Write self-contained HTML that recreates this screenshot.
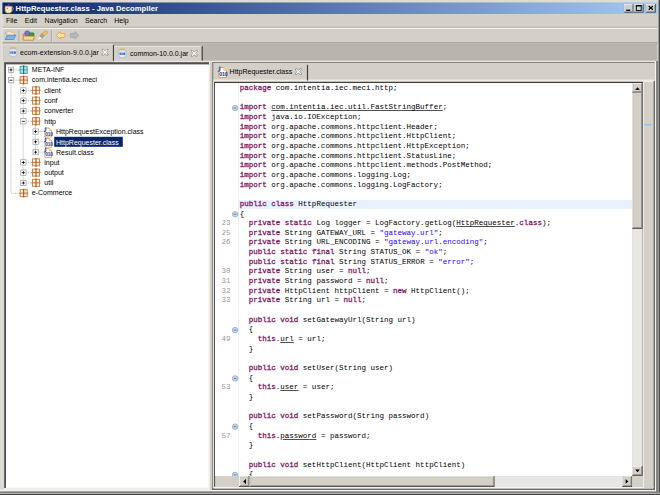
<!DOCTYPE html>
<html><head><meta charset="utf-8"><style>
html,body{margin:0;padding:0;width:660px;height:495px;overflow:hidden;background:#d4d0c8}
.t{position:absolute;white-space:pre}
u{text-decoration:underline;text-decoration-color:#505050;text-decoration-thickness:0.7px;text-underline-offset:1px}
b{font-weight:normal;-webkit-text-stroke:0.28px #801860;color:#801860 !important}
svg.bg{position:absolute;left:0;top:0}
</style></head><body>
<svg class="bg" width="660" height="495" viewBox="0 0 660 495">
<rect x="0.00" y="0.00" width="660.00" height="495.00" fill="#d4d0c8" />
<rect x="0.00" y="0.00" width="660.00" height="2.50" fill="#dedbd5" />
<rect x="0.00" y="0.00" width="3.60" height="495.00" fill="#dcdad4" />
<rect x="1.45" y="1.45" width="1.00" height="492.00" fill="#e6e3de" />
<rect x="654.90" y="61.00" width="1.20" height="434.00" fill="#f4f3f0" />
<rect x="656.10" y="61.00" width="2.10" height="434.00" fill="#808080" />
<rect x="658.20" y="0.00" width="0.50" height="495.00" fill="#b8b6b0" />
<rect x="658.70" y="0.00" width="1.30" height="495.00" fill="#484848" />
<rect x="0.00" y="490.00" width="656.00" height="1.20" fill="#f4f3f0" />
<rect x="0.00" y="491.40" width="660.00" height="1.60" fill="#808080" />
<rect x="0.00" y="493.00" width="660.00" height="0.90" fill="#c0beb8" />
<rect x="0.00" y="493.90" width="660.00" height="1.10" fill="#404040" />
<defs><linearGradient id="tg" x1="0" x2="1" y1="0" y2="0"><stop offset="0" stop-color="#0a246a"/><stop offset="1" stop-color="#a6caf0"/></linearGradient><clipPath id="cc"><rect x="215" y="83.1" width="24" height="393.1"/></clipPath><pattern id="chk" width="2" height="2" patternUnits="userSpaceOnUse"><rect width="2" height="2" fill="#d4d0c8"/><rect width="1" height="1" fill="#fff"/><rect x="1" y="1" width="1" height="1" fill="#fff"/></pattern></defs>
<rect x="2.40" y="2.50" width="655.20" height="11.50" fill="url(#tg)" />
<g transform="translate(4.2,3.8) scale(1)"><path d="M0.9 2.4 h6.8 v4.4 q0 2.4 -2.4 2.4 h-2 q-2.4 0 -2.4 -2.4 z" fill="#fcecc8" stroke="#c89048" stroke-width="0.7"/>
<path d="M7.6 3.4 q2 0.2 1.4 2.2 q-0.4 1.4 -1.6 1.4" fill="none" stroke="#c89048" stroke-width="0.9"/>
<path d="M3.6 2 q0.2 -1.2 1.6 -2" fill="none" stroke="#8a8aa8" stroke-width="0.6"/>
<circle cx="3.2" cy="4.6" r="0.55" fill="#e04858"/></g>
<rect x="623.90" y="4.00" width="9.50" height="8.60" fill="#404040" />
<rect x="623.90" y="4.00" width="8.70" height="7.80" fill="#fff" />
<rect x="624.70" y="4.80" width="7.90" height="7.00" fill="#808080" />
<rect x="624.70" y="4.80" width="7.30" height="6.40" fill="#d4d0c8" />
<rect x="626.20" y="9.60" width="4.10" height="1.40" fill="#000" />
<rect x="633.70" y="4.00" width="9.90" height="8.60" fill="#404040" />
<rect x="633.70" y="4.00" width="9.10" height="7.80" fill="#fff" />
<rect x="634.50" y="4.80" width="8.30" height="7.00" fill="#808080" />
<rect x="634.50" y="4.80" width="7.70" height="6.40" fill="#d4d0c8" />
<rect x="636.3" y="5.6" width="4.9" height="4.9" fill="none" stroke="#000" stroke-width="0.9"/><rect x="635.9" y="5.2" width="5.7" height="1.2" fill="#000"/>
<rect x="645.80" y="4.00" width="10.10" height="8.60" fill="#404040" />
<rect x="645.80" y="4.00" width="9.30" height="7.80" fill="#fff" />
<rect x="646.60" y="4.80" width="8.50" height="7.00" fill="#808080" />
<rect x="646.60" y="4.80" width="7.90" height="6.40" fill="#d4d0c8" />
<path d="M648.7 6.1 L652.9 9.7 M652.9 6.1 L648.7 9.7" stroke="#000" stroke-width="1.3"/>
<rect x="2.40" y="26.80" width="655.20" height="1.00" fill="#a8a8a0" />
<rect x="2.40" y="27.80" width="655.20" height="1.00" fill="#fbfaf8" />
<rect x="18.50" y="30.30" width="1.20" height="11.20" fill="#a8acb0" />
<rect x="19.70" y="30.30" width="0.60" height="11.20" fill="#e4e2de" />
<rect x="50.90" y="30.30" width="1.20" height="11.20" fill="#a8acb0" />
<rect x="52.10" y="30.30" width="0.60" height="11.20" fill="#e4e2de" />
<g transform="translate(4.8,30.8) scale(1)"><path d="M2.2 0.6 h2.8 l1 1 h3.6 v6.8 h-7.4 z" fill="#fbe8b8" stroke="#d8b070" stroke-width="0.6"/>
<path d="M0.4 1.6 v2" stroke="#8090b0" stroke-width="0.5"/>
<path d="M0.4 8.7 L2.6 4.3 H11 L8.8 8.7 Z" fill="#80b4ee" stroke="#3c70c0" stroke-width="0.6"/></g>
<g transform="translate(22.6,30.4) scale(1)"><path d="M0.5 3.6 h3.4 l1 1 h6.4 v5 h-10.8 z" fill="#e8a850" stroke="#b07830" stroke-width="0.6"/>
<circle cx="4.6" cy="3" r="2.6" fill="#8070c8" stroke="#5848a0" stroke-width="0.5"/>
<rect x="6.8" y="2.4" width="4.6" height="3.4" rx="0.6" fill="#30a040" stroke="#207030" stroke-width="0.5"/>
<path d="M0.5 9.6 L1.4 5.8 H11.6 L10.8 9.6 Z" fill="#f8d890" stroke="#c08840" stroke-width="0.6"/></g>
<g transform="translate(36.8,30.4) scale(1)"><path d="M0.4 9.8 Q0.8 7 3 5.6 L5 7.6 Q3.4 9.6 0.4 9.8 Z" fill="#fff4dc" stroke="#e8b060" stroke-width="0.5"/>
<path d="M3 5.4 L5.2 3.2 L7.4 5.4 L5.2 7.6 Z" fill="#a8a8a8" stroke="#787878" stroke-width="0.5"/>
<path d="M5.2 3.2 L8.6 0.6 Q10.6 0.4 10.8 2.4 L7.4 5.4 Z" fill="#f0c070" stroke="#c89040" stroke-width="0.6"/></g>
<g transform="translate(55.9,31.1) scale(1)"><path d="M0.5 4.3 L4.2 0.5 V2.2 H8.2 Q9 2.2 9 3 V5.6 Q9 6.4 8.2 6.4 H4.2 V8.1 Z" fill="#fde2a4" stroke="#e4a444" stroke-width="0.9"/></g>
<g transform="translate(69.9,31.1) scale(1)"><path d="M8.9 4.3 L5.2 0.5 V2.2 H1.2 Q0.4 2.2 0.4 3 V5.6 Q0.4 6.4 1.2 6.4 H5.2 V8.1 Z" fill="#b4b8bc" stroke="#a0a4a8" stroke-width="0.8"/></g>
<rect x="2.40" y="42.20" width="655.20" height="1.20" fill="#a4a09a" />
<rect x="3.60" y="43.40" width="653.50" height="17.40" fill="#b8b5ae" />
<rect x="3.60" y="44.00" width="109.40" height="17.30" fill="#d4d0c8" />
<rect x="3.60" y="44.00" width="109.40" height="0.70" fill="#e8e6e0" />
<rect x="112.90" y="45.00" width="1.10" height="15.80" fill="#404040" />
<rect x="114.00" y="45.90" width="87.70" height="15.00" fill="#d4d0c8" />
<rect x="114.00" y="45.90" width="87.70" height="0.70" fill="#ecebe6" />
<rect x="201.60" y="46.20" width="1.20" height="14.60" fill="#404040" />
<rect x="114.00" y="60.80" width="541.00" height="0.90" fill="#f4f3f0" />
<g transform="translate(9,46.8) scale(1)"><rect x="1.2" y="0.2" width="5.6" height="2" rx="0.6" fill="#eab868"/>
<rect x="0.5" y="2" width="7.2" height="7.6" rx="2" fill="#e4ecf8" stroke="#98b0d8" stroke-width="0.6"/>
<rect x="1.3" y="4.6" width="5.6" height="2.4" fill="#5070a8"/>
<path d="M2.9 4.6 V7 M4.6 4.6 V7" stroke="#e4ecf8" stroke-width="0.5"/></g>
<g transform="translate(118.3,48) scale(1)"><rect x="1.2" y="0.2" width="5.6" height="2" rx="0.6" fill="#eab868"/>
<rect x="0.5" y="2" width="7.2" height="7.6" rx="2" fill="#e4ecf8" stroke="#98b0d8" stroke-width="0.6"/>
<rect x="1.3" y="4.6" width="5.6" height="2.4" fill="#5070a8"/>
<path d="M2.9 4.6 V7 M4.6 4.6 V7" stroke="#e4ecf8" stroke-width="0.5"/></g>
<g transform="translate(101.8,49) scale(1)"><path d="M1 1 L5.6 5.6 M5.6 1 L1 5.6" stroke="#9c9890" stroke-width="2.4" stroke-linecap="round"/>
<path d="M1 1 L5.6 5.6 M5.6 1 L1 5.6" stroke="#fff" stroke-width="1.1"/></g>
<g transform="translate(190.9,50) scale(1)"><path d="M1 1 L5.6 5.6 M5.6 1 L1 5.6" stroke="#9c9890" stroke-width="2.4" stroke-linecap="round"/>
<path d="M1 1 L5.6 5.6 M5.6 1 L1 5.6" stroke="#fff" stroke-width="1.1"/></g>
<rect x="4.00" y="62.00" width="206.00" height="428.00" fill="#eeede9" />
<rect x="4.00" y="62.00" width="205.00" height="1.00" fill="#707070" />
<rect x="4.00" y="62.00" width="1.00" height="426.00" fill="#707070" />
<rect x="4.90" y="62.90" width="204.00" height="1.70" fill="#505050" />
<rect x="4.90" y="62.90" width="1.10" height="425.00" fill="#4e4e4e" />
<rect x="6.00" y="64.60" width="202.50" height="423.10" fill="#fff" />
<line x1="11" y1="72.9" x2="11" y2="193.26" stroke="#b8b8b8" stroke-width="0.8" stroke-dasharray="1.4 0.6"/>
<line x1="23.2" y1="83.18" x2="23.2" y2="182.98000000000002" stroke="#b8b8b8" stroke-width="0.8" stroke-dasharray="1.4 0.6"/>
<line x1="35.4" y1="124.30000000000001" x2="35.4" y2="152.14" stroke="#b8b8b8" stroke-width="0.8" stroke-dasharray="1.4 0.6"/>
<line x1="13.7" y1="69.9" x2="19.0" y2="69.9" stroke="#b8b8b8" stroke-width="0.8" stroke-dasharray="1.4 0.6"/>
<rect x="8.40" y="67.20" width="5.3" height="5.3" fill="#fff" stroke="#9a9a9a" stroke-width="0.7"/>
<rect x="9.50" y="69.50" width="3.00" height="0.80" fill="#000" />
<rect x="10.60" y="68.40" width="0.80" height="3.00" fill="#000" />
<g transform="translate(19.7,65.80000000000001) scale(1)"><rect x="0.5" y="0.5" width="7" height="7" fill="#b0e4e0" stroke="#38aca4" stroke-width="1"/>
<path d="M-0.7 4 H8.7" stroke="#40a8b0" stroke-width="0.9"/>
<path d="M4 -0.4 V8.4" stroke="#304a80" stroke-width="1"/></g>
<line x1="13.7" y1="80.18" x2="19.0" y2="80.18" stroke="#b8b8b8" stroke-width="0.8" stroke-dasharray="1.4 0.6"/>
<rect x="8.40" y="77.48" width="5.3" height="5.3" fill="#fff" stroke="#9a9a9a" stroke-width="0.7"/>
<rect x="9.50" y="79.78" width="3.00" height="0.80" fill="#000" />
<g transform="translate(19.7,76.08000000000001) scale(1)"><rect x="0.5" y="0.5" width="7" height="7" fill="#fcecd4" stroke="#c88848" stroke-width="1"/>
<path d="M-0.7 4 H8.7" stroke="#c07838" stroke-width="1"/>
<path d="M4 -0.4 V8.4" stroke="#8a5030" stroke-width="1"/></g>
<line x1="26.0" y1="90.46000000000001" x2="31.3" y2="90.46000000000001" stroke="#b8b8b8" stroke-width="0.8" stroke-dasharray="1.4 0.6"/>
<rect x="20.70" y="87.76" width="5.3" height="5.3" fill="#fff" stroke="#9a9a9a" stroke-width="0.7"/>
<rect x="21.80" y="90.06" width="3.00" height="0.80" fill="#000" />
<rect x="22.90" y="88.96" width="0.80" height="3.00" fill="#000" />
<g transform="translate(32.0,86.36000000000001) scale(1)"><rect x="0.5" y="0.5" width="7" height="7" fill="#fcecd4" stroke="#c88848" stroke-width="1"/>
<path d="M-0.7 4 H8.7" stroke="#c07838" stroke-width="1"/>
<path d="M4 -0.4 V8.4" stroke="#8a5030" stroke-width="1"/></g>
<line x1="26.0" y1="100.74000000000001" x2="31.3" y2="100.74000000000001" stroke="#b8b8b8" stroke-width="0.8" stroke-dasharray="1.4 0.6"/>
<rect x="20.70" y="98.04" width="5.3" height="5.3" fill="#fff" stroke="#9a9a9a" stroke-width="0.7"/>
<rect x="21.80" y="100.34" width="3.00" height="0.80" fill="#000" />
<rect x="22.90" y="99.24" width="0.80" height="3.00" fill="#000" />
<g transform="translate(32.0,96.64000000000001) scale(1)"><rect x="0.5" y="0.5" width="7" height="7" fill="#fcecd4" stroke="#c88848" stroke-width="1"/>
<path d="M-0.7 4 H8.7" stroke="#c07838" stroke-width="1"/>
<path d="M4 -0.4 V8.4" stroke="#8a5030" stroke-width="1"/></g>
<line x1="26.0" y1="111.02000000000001" x2="31.3" y2="111.02000000000001" stroke="#b8b8b8" stroke-width="0.8" stroke-dasharray="1.4 0.6"/>
<rect x="20.70" y="108.32" width="5.3" height="5.3" fill="#fff" stroke="#9a9a9a" stroke-width="0.7"/>
<rect x="21.80" y="110.62" width="3.00" height="0.80" fill="#000" />
<rect x="22.90" y="109.52" width="0.80" height="3.00" fill="#000" />
<g transform="translate(32.0,106.92000000000002) scale(1)"><rect x="0.5" y="0.5" width="7" height="7" fill="#fcecd4" stroke="#c88848" stroke-width="1"/>
<path d="M-0.7 4 H8.7" stroke="#c07838" stroke-width="1"/>
<path d="M4 -0.4 V8.4" stroke="#8a5030" stroke-width="1"/></g>
<line x1="26.0" y1="121.30000000000001" x2="31.3" y2="121.30000000000001" stroke="#b8b8b8" stroke-width="0.8" stroke-dasharray="1.4 0.6"/>
<rect x="20.70" y="118.60" width="5.3" height="5.3" fill="#fff" stroke="#9a9a9a" stroke-width="0.7"/>
<rect x="21.80" y="120.90" width="3.00" height="0.80" fill="#000" />
<g transform="translate(32.0,117.20000000000002) scale(1)"><rect x="0.5" y="0.5" width="7" height="7" fill="#fcecd4" stroke="#c88848" stroke-width="1"/>
<path d="M-0.7 4 H8.7" stroke="#c07838" stroke-width="1"/>
<path d="M4 -0.4 V8.4" stroke="#8a5030" stroke-width="1"/></g>
<line x1="38.300000000000004" y1="131.57999999999998" x2="43.6" y2="131.57999999999998" stroke="#b8b8b8" stroke-width="0.8" stroke-dasharray="1.4 0.6"/>
<rect x="33.00" y="128.88" width="5.3" height="5.3" fill="#fff" stroke="#9a9a9a" stroke-width="0.7"/>
<rect x="34.10" y="131.18" width="3.00" height="0.80" fill="#000" />
<rect x="35.20" y="130.08" width="0.80" height="3.00" fill="#000" />
<g transform="translate(44.3,126.97999999999999) scale(1)"><path d="M0.6 1.1 H5 L7.4 3.5 V10 H0.6 Z" fill="#fff" stroke="#d09858" stroke-width="0.8"/>
<path d="M5 1.1 V3.5 H7.4" fill="#f8e4b8" stroke="#d8a868" stroke-width="0.6"/>
<text x="1.0" y="8.6" font-size="4.7" font-weight="bold" font-family="Liberation Sans" fill="#1a3480" letter-spacing="-0.15">010</text>
<path d="M1.5 0.2 V3.3 Q1.5 4.6 -0.3 4.4" fill="none" stroke="#2a58c0" stroke-width="1.1"/></g>
<line x1="38.300000000000004" y1="141.86" x2="43.6" y2="141.86" stroke="#b8b8b8" stroke-width="0.8" stroke-dasharray="1.4 0.6"/>
<rect x="33.00" y="139.16" width="5.3" height="5.3" fill="#fff" stroke="#9a9a9a" stroke-width="0.7"/>
<rect x="34.10" y="141.46" width="3.00" height="0.80" fill="#000" />
<rect x="35.20" y="140.36" width="0.80" height="3.00" fill="#000" />
<g transform="translate(44.3,137.26000000000002) scale(1)"><path d="M0.6 1.1 H5 L7.4 3.5 V10 H0.6 Z" fill="#fff" stroke="#d09858" stroke-width="0.8"/>
<path d="M5 1.1 V3.5 H7.4" fill="#f8e4b8" stroke="#d8a868" stroke-width="0.6"/>
<text x="1.0" y="8.6" font-size="4.7" font-weight="bold" font-family="Liberation Sans" fill="#1a3480" letter-spacing="-0.15">010</text>
<path d="M1.5 0.2 V3.3 Q1.5 4.6 -0.3 4.4" fill="none" stroke="#2a58c0" stroke-width="1.1"/></g>
<rect x="54.20" y="136.80" width="68.60" height="10.00" fill="#0a246a" />
<line x1="38.300000000000004" y1="152.14" x2="43.6" y2="152.14" stroke="#b8b8b8" stroke-width="0.8" stroke-dasharray="1.4 0.6"/>
<rect x="33.00" y="149.44" width="5.3" height="5.3" fill="#fff" stroke="#9a9a9a" stroke-width="0.7"/>
<rect x="34.10" y="151.74" width="3.00" height="0.80" fill="#000" />
<rect x="35.20" y="150.64" width="0.80" height="3.00" fill="#000" />
<g transform="translate(44.3,147.54) scale(1)"><path d="M0.6 1.1 H5 L7.4 3.5 V10 H0.6 Z" fill="#fff" stroke="#d09858" stroke-width="0.8"/>
<path d="M5 1.1 V3.5 H7.4" fill="#f8e4b8" stroke="#d8a868" stroke-width="0.6"/>
<text x="1.0" y="8.6" font-size="4.7" font-weight="bold" font-family="Liberation Sans" fill="#1a3480" letter-spacing="-0.15">010</text>
<path d="M1.5 0.2 V3.3 Q1.5 4.6 -0.3 4.4" fill="none" stroke="#2a58c0" stroke-width="1.1"/></g>
<line x1="26.0" y1="162.42000000000002" x2="31.3" y2="162.42000000000002" stroke="#b8b8b8" stroke-width="0.8" stroke-dasharray="1.4 0.6"/>
<rect x="20.70" y="159.72" width="5.3" height="5.3" fill="#fff" stroke="#9a9a9a" stroke-width="0.7"/>
<rect x="21.80" y="162.02" width="3.00" height="0.80" fill="#000" />
<rect x="22.90" y="160.92" width="0.80" height="3.00" fill="#000" />
<g transform="translate(32.0,158.32000000000002) scale(1)"><rect x="0.5" y="0.5" width="7" height="7" fill="#fcecd4" stroke="#c88848" stroke-width="1"/>
<path d="M-0.7 4 H8.7" stroke="#c07838" stroke-width="1"/>
<path d="M4 -0.4 V8.4" stroke="#8a5030" stroke-width="1"/></g>
<line x1="26.0" y1="172.7" x2="31.3" y2="172.7" stroke="#b8b8b8" stroke-width="0.8" stroke-dasharray="1.4 0.6"/>
<rect x="20.70" y="170.00" width="5.3" height="5.3" fill="#fff" stroke="#9a9a9a" stroke-width="0.7"/>
<rect x="21.80" y="172.30" width="3.00" height="0.80" fill="#000" />
<rect x="22.90" y="171.20" width="0.80" height="3.00" fill="#000" />
<g transform="translate(32.0,168.6) scale(1)"><rect x="0.5" y="0.5" width="7" height="7" fill="#fcecd4" stroke="#c88848" stroke-width="1"/>
<path d="M-0.7 4 H8.7" stroke="#c07838" stroke-width="1"/>
<path d="M4 -0.4 V8.4" stroke="#8a5030" stroke-width="1"/></g>
<line x1="26.0" y1="182.98000000000002" x2="31.3" y2="182.98000000000002" stroke="#b8b8b8" stroke-width="0.8" stroke-dasharray="1.4 0.6"/>
<rect x="20.70" y="180.28" width="5.3" height="5.3" fill="#fff" stroke="#9a9a9a" stroke-width="0.7"/>
<rect x="21.80" y="182.58" width="3.00" height="0.80" fill="#000" />
<rect x="22.90" y="181.48" width="0.80" height="3.00" fill="#000" />
<g transform="translate(32.0,178.88000000000002) scale(1)"><rect x="0.5" y="0.5" width="7" height="7" fill="#fcecd4" stroke="#c88848" stroke-width="1"/>
<path d="M-0.7 4 H8.7" stroke="#c07838" stroke-width="1"/>
<path d="M4 -0.4 V8.4" stroke="#8a5030" stroke-width="1"/></g>
<line x1="11.0" y1="193.26" x2="19.0" y2="193.26" stroke="#b8b8b8" stroke-width="0.8" stroke-dasharray="1.4 0.6"/>
<g transform="translate(19.7,189.16) scale(1)"><rect x="0.5" y="0.5" width="7" height="7" fill="#fcecd4" stroke="#c88848" stroke-width="1"/>
<path d="M-0.7 4 H8.7" stroke="#c07838" stroke-width="1"/>
<path d="M4 -0.4 V8.4" stroke="#8a5030" stroke-width="1"/></g>
<rect x="212.10" y="62.00" width="442.50" height="1.00" fill="#808080" />
<rect x="212.10" y="62.00" width="1.20" height="427.60" fill="#808080" />
<rect x="653.40" y="81.00" width="1.40" height="408.60" fill="#505050" />
<rect x="212.10" y="488.50" width="442.70" height="1.40" fill="#606060" />
<rect x="214.00" y="486.70" width="439.40" height="1.70" fill="#f4f3f0" />
<rect x="213.30" y="79.60" width="440.20" height="1.30" fill="#f0efea" />
<rect x="306.90" y="64.80" width="1.20" height="15.80" fill="#404040" />
<g transform="translate(218.2,66.3) scale(1.12)"><path d="M0.6 1.1 H5 L7.4 3.5 V10 H0.6 Z" fill="#fff" stroke="#d09858" stroke-width="0.8"/>
<path d="M5 1.1 V3.5 H7.4" fill="#f8e4b8" stroke="#d8a868" stroke-width="0.6"/>
<text x="1.0" y="8.6" font-size="4.7" font-weight="bold" font-family="Liberation Sans" fill="#1a3480" letter-spacing="-0.15">010</text>
<path d="M1.5 0.2 V3.3 Q1.5 4.6 -0.3 4.4" fill="none" stroke="#2a58c0" stroke-width="1.1"/></g>
<g transform="translate(295.1,68.3) scale(1)"><path d="M1 1 L5.6 5.6 M5.6 1 L1 5.6" stroke="#9c9890" stroke-width="2.4" stroke-linecap="round"/>
<path d="M1 1 L5.6 5.6 M5.6 1 L1 5.6" stroke="#fff" stroke-width="1.1"/></g>
<rect x="214.00" y="81.90" width="429.30" height="1.20" fill="#404040" />
<rect x="214.00" y="81.90" width="1.30" height="404.80" fill="#404040" />
<rect x="213.30" y="81.00" width="0.80" height="407.00" fill="#f4f3f0" />
<rect x="215.00" y="83.10" width="417.20" height="393.10" fill="#fff" />
<rect x="215.30" y="476.20" width="23.70" height="10.50" fill="#d4d0c8" />
<rect x="238.30" y="83.10" width="0.70" height="393.10" fill="#e8e8e8" />
<rect x="239.00" y="199.86" width="393.20" height="9.05" fill="#e8f2fe" />
<rect x="632.20" y="83.10" width="11.20" height="393.10" fill="#e9e7e3" />
<rect x="642.50" y="83.10" width="0.90" height="393.10" fill="#808080" />
<rect x="632.20" y="83.10" width="10.40" height="9.60" fill="#404040" />
<rect x="632.20" y="83.10" width="9.50" height="8.70" fill="#fff" />
<rect x="633.10" y="84.00" width="8.60" height="7.80" fill="#808080" />
<rect x="633.10" y="84.00" width="7.90" height="7.10" fill="#d4d0c8" />
<path d="M635.2 90 L637.5 87.3 L639.8 90 z" fill="#000"/>
<rect x="632.20" y="92.70" width="10.40" height="136.10" fill="#404040" />
<rect x="632.20" y="92.70" width="9.50" height="135.20" fill="#fff" />
<rect x="633.10" y="93.60" width="8.60" height="134.30" fill="#808080" />
<rect x="633.10" y="93.60" width="7.90" height="133.60" fill="#d4d0c8" />
<rect x="632.20" y="466.00" width="10.40" height="9.80" fill="#404040" />
<rect x="632.20" y="466.00" width="9.50" height="8.90" fill="#fff" />
<rect x="633.10" y="466.90" width="8.60" height="8.00" fill="#808080" />
<rect x="633.10" y="466.90" width="7.90" height="7.30" fill="#d4d0c8" />
<path d="M635.2 469.6 L637.5 472.3 L639.8 469.6 z" fill="#000"/>
<rect x="239.00" y="476.20" width="393.20" height="10.80" fill="#e9e7e3" />
<rect x="239.00" y="476.20" width="10.40" height="10.80" fill="#404040" />
<rect x="239.00" y="476.20" width="9.50" height="9.90" fill="#fff" />
<rect x="239.90" y="477.10" width="8.60" height="9.00" fill="#808080" />
<rect x="239.90" y="477.10" width="7.90" height="8.30" fill="#d4d0c8" />
<path d="M246 479 L243.2 481.6 L246 484.2 z" fill="#000"/>
<rect x="249.60" y="476.20" width="244.90" height="10.80" fill="#404040" />
<rect x="249.60" y="476.20" width="244.00" height="9.90" fill="#fff" />
<rect x="250.50" y="477.10" width="243.10" height="9.00" fill="#808080" />
<rect x="250.50" y="477.10" width="242.40" height="8.30" fill="#d4d0c8" />
<rect x="622.20" y="476.20" width="10.00" height="10.80" fill="#404040" />
<rect x="622.20" y="476.20" width="9.10" height="9.90" fill="#fff" />
<rect x="623.10" y="477.10" width="8.20" height="9.00" fill="#808080" />
<rect x="623.10" y="477.10" width="7.50" height="8.30" fill="#d4d0c8" />
<path d="M625.6 479 L628.4 481.4 L625.6 483.8 z" fill="#000"/>
<rect x="632.20" y="476.20" width="10.80" height="10.80" fill="#d4d0c8" />
<rect x="643.30" y="81.00" width="10.20" height="407.00" fill="#d4d0c8" />
<rect x="643.10" y="81.00" width="0.90" height="407.00" fill="#f4f3f0" />
<rect x="643.10" y="81.00" width="10.40" height="0.80" fill="#f4f3f0" />
<rect x="644.00" y="124.10" width="8.40" height="1.40" fill="#90c0f0" />
<g clip-path="url(#cc)"><g transform="translate(235.1,108.04)"><circle r="2.75" fill="#c8d8ec" stroke="#90a8cc" stroke-width="0.8"/><path d="M-1.4 0 H1.4" stroke="#5a70a0" stroke-width="0.9"/></g></g>
<g clip-path="url(#cc)"><g transform="translate(235.1,214.24)"><circle r="2.75" fill="#c8d8ec" stroke="#90a8cc" stroke-width="0.8"/><path d="M-1.4 0 H1.4" stroke="#5a70a0" stroke-width="0.9"/></g></g>
<g clip-path="url(#cc)"><g transform="translate(235.1,330.10)"><circle r="2.75" fill="#c8d8ec" stroke="#90a8cc" stroke-width="0.8"/><path d="M-1.4 0 H1.4" stroke="#5a70a0" stroke-width="0.9"/></g></g>
<g clip-path="url(#cc)"><g transform="translate(235.1,378.38)"><circle r="2.75" fill="#c8d8ec" stroke="#90a8cc" stroke-width="0.8"/><path d="M-1.4 0 H1.4" stroke="#5a70a0" stroke-width="0.9"/></g></g>
<g clip-path="url(#cc)"><g transform="translate(235.1,426.65)"><circle r="2.75" fill="#c8d8ec" stroke="#90a8cc" stroke-width="0.8"/><path d="M-1.4 0 H1.4" stroke="#5a70a0" stroke-width="0.9"/></g></g>
<g clip-path="url(#cc)"><g transform="translate(235.1,474.93)"><circle r="2.75" fill="#c8d8ec" stroke="#90a8cc" stroke-width="0.8"/><path d="M-1.4 0 H1.4" stroke="#5a70a0" stroke-width="0.9"/></g></g>
</svg>
<div class="t" style="left:15.6px;top:4.2px;font:bold 7.6px/10px 'Liberation Sans';color:#fff;letter-spacing:0.06px">HttpRequester.class - Java Decompiler</div>
<div class="t" style="left:6px;top:15.8px;font:7px/9px 'Liberation Sans';color:#000">File</div>
<div class="t" style="left:24.8px;top:15.8px;font:7px/9px 'Liberation Sans';color:#000">Edit</div>
<div class="t" style="left:44.6px;top:15.8px;font:7px/9px 'Liberation Sans';color:#000">Navigation</div>
<div class="t" style="left:85px;top:15.8px;font:7px/9px 'Liberation Sans';color:#000">Search</div>
<div class="t" style="left:114.2px;top:15.8px;font:7px/9px 'Liberation Sans';color:#000">Help</div>
<div class="t" style="left:20px;top:48.2px;font:7px/9px 'Liberation Sans';color:#000;letter-spacing:0.08px">ecom-extension-9.0.0.jar</div>
<div class="t" style="left:130px;top:49.0px;font:7px/9px 'Liberation Sans';color:#000">common-10.0.0.jar</div>
<div class="t" style="left:31.8px;top:65.10000000000001px;font:7px/9px 'Liberation Sans';color:#000">META-INF</div>
<div class="t" style="left:31.8px;top:75.38000000000001px;font:7px/9px 'Liberation Sans';color:#000">com.intentia.iec.meci</div>
<div class="t" style="left:44.3px;top:85.66000000000001px;font:7px/9px 'Liberation Sans';color:#000">client</div>
<div class="t" style="left:44.3px;top:95.94000000000001px;font:7px/9px 'Liberation Sans';color:#000">conf</div>
<div class="t" style="left:44.3px;top:106.22000000000001px;font:7px/9px 'Liberation Sans';color:#000">converter</div>
<div class="t" style="left:44.3px;top:116.50000000000001px;font:7px/9px 'Liberation Sans';color:#000">http</div>
<div class="t" style="left:56px;top:127.27999999999999px;font:7px/9px 'Liberation Sans';color:#000">HttpRequestException.class</div>
<div class="t" style="left:56px;top:137.56px;font:7px/9px 'Liberation Sans';color:#fff">HttpRequester.class</div>
<div class="t" style="left:56px;top:147.83999999999997px;font:7px/9px 'Liberation Sans';color:#000">Result.class</div>
<div class="t" style="left:44.3px;top:157.62px;font:7px/9px 'Liberation Sans';color:#000">input</div>
<div class="t" style="left:44.3px;top:167.89999999999998px;font:7px/9px 'Liberation Sans';color:#000">output</div>
<div class="t" style="left:44.3px;top:178.18px;font:7px/9px 'Liberation Sans';color:#000">util</div>
<div class="t" style="left:31.8px;top:188.45999999999998px;font:7px/9px 'Liberation Sans';color:#000">e-Commerce</div>
<div class="t" style="left:229.6px;top:67.0px;font:7px/9px 'Liberation Sans';color:#000">HttpRequester.class</div>
<div style="position:absolute;left:215px;top:83.1px;width:417.2px;height:393.1px;overflow:hidden">
<div class="t" style="left:24.7px;top:0.900px;font:7.52px/9.655px 'Liberation Mono';color:#000"><b style="color:#7f0055">package</b> com.intentia.iec.meci.http;
 
<b style="color:#7f0055">import</b> <u>com.intentia.iec.util.FastStringBuffer</u>;
<b style="color:#7f0055">import</b> java.io.IOException;
<b style="color:#7f0055">import</b> org.apache.commons.httpclient.Header;
<b style="color:#7f0055">import</b> org.apache.commons.httpclient.HttpClient;
<b style="color:#7f0055">import</b> org.apache.commons.httpclient.HttpException;
<b style="color:#7f0055">import</b> org.apache.commons.httpclient.StatusLine;
<b style="color:#7f0055">import</b> org.apache.commons.httpclient.methods.PostMethod;
<b style="color:#7f0055">import</b> org.apache.commons.logging.Log;
<b style="color:#7f0055">import</b> org.apache.commons.logging.LogFactory;
 
<b style="color:#7f0055">public</b> <b style="color:#7f0055">class</b> HttpRequester
{
  <b style="color:#7f0055">private</b> <b style="color:#7f0055">static</b> Log logger = LogFactory.getLog(<u>HttpRequester</u>.<b style="color:#7f0055">class</b>);
  <b style="color:#7f0055">private</b> String GATEWAY_URL = <span style="color:#2a00ff">&quot;gateway.url&quot;</span>;
  <b style="color:#7f0055">private</b> String URL_ENCODING = <span style="color:#2a00ff">&quot;gateway.url.encoding&quot;</span>;
  <b style="color:#7f0055">public</b> <b style="color:#7f0055">static</b> <b style="color:#7f0055">final</b> String STATUS_OK = <span style="color:#2a00ff">&quot;ok&quot;</span>;
  <b style="color:#7f0055">public</b> <b style="color:#7f0055">static</b> <b style="color:#7f0055">final</b> String STATUS_ERROR = <span style="color:#2a00ff">&quot;error&quot;</span>;
  <b style="color:#7f0055">private</b> String user = <b style="color:#7f0055">null</b>;
  <b style="color:#7f0055">private</b> String password = <b style="color:#7f0055">null</b>;
  <b style="color:#7f0055">private</b> HttpClient httpClient = <b style="color:#7f0055">new</b> HttpClient();
  <b style="color:#7f0055">private</b> String url = <b style="color:#7f0055">null</b>;
 
  <b style="color:#7f0055">public</b> <b style="color:#7f0055">void</b> setGatewayUrl(String url)
  {
    <b style="color:#7f0055">this</b>.<u>url</u> = url;
  }
 
  <b style="color:#7f0055">public</b> <b style="color:#7f0055">void</b> setUser(String user)
  {
    <b style="color:#7f0055">this</b>.<u>user</u> = user;
  }
 
  <b style="color:#7f0055">public</b> <b style="color:#7f0055">void</b> setPassword(String password)
  {
    <b style="color:#7f0055">this</b>.<u>password</u> = password;
  }
 
  <b style="color:#7f0055">public</b> <b style="color:#7f0055">void</b> setHttpClient(HttpClient httpClient)
  {</div>
<div class="t" style="left:6.5px;top:136.070px;font:7.5px/9.655px 'Liberation Mono';color:#9a9a9a">23</div>
<div class="t" style="left:6.5px;top:145.725px;font:7.5px/9.655px 'Liberation Mono';color:#9a9a9a">25</div>
<div class="t" style="left:6.5px;top:155.380px;font:7.5px/9.655px 'Liberation Mono';color:#9a9a9a">26</div>
<div class="t" style="left:6.5px;top:184.345px;font:7.5px/9.655px 'Liberation Mono';color:#9a9a9a">30</div>
<div class="t" style="left:6.5px;top:194.000px;font:7.5px/9.655px 'Liberation Mono';color:#9a9a9a">31</div>
<div class="t" style="left:6.5px;top:203.655px;font:7.5px/9.655px 'Liberation Mono';color:#9a9a9a">32</div>
<div class="t" style="left:6.5px;top:213.310px;font:7.5px/9.655px 'Liberation Mono';color:#9a9a9a">33</div>
<div class="t" style="left:6.5px;top:251.930px;font:7.5px/9.655px 'Liberation Mono';color:#9a9a9a">49</div>
<div class="t" style="left:6.5px;top:300.205px;font:7.5px/9.655px 'Liberation Mono';color:#9a9a9a">53</div>
<div class="t" style="left:6.5px;top:348.480px;font:7.5px/9.655px 'Liberation Mono';color:#9a9a9a">57</div>
</div>
</body></html>
